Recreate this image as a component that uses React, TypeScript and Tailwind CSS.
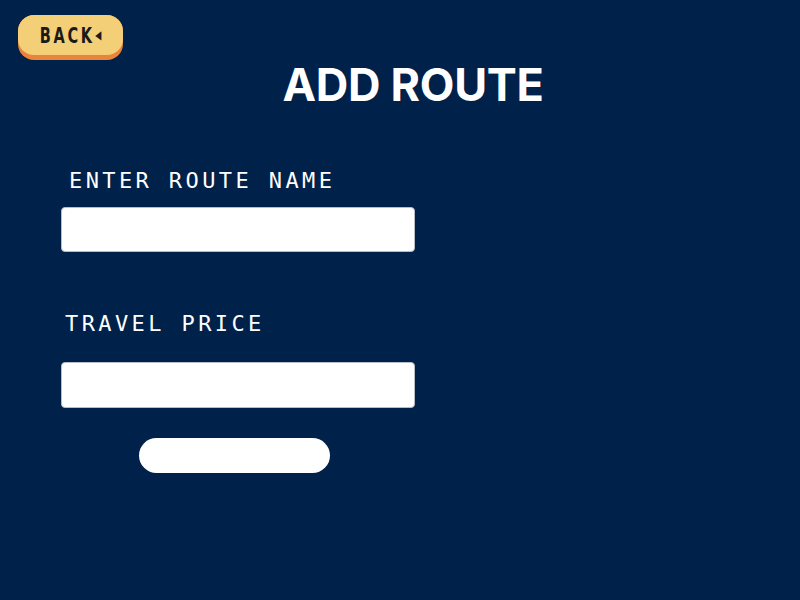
import React from 'react';

const App: React.FC = () => {
  return (
    <div className="w-[800px] h-[600px] bg-[#00214a] overflow-hidden relative">
      {/* Back */}
      <div className="pt-[15px] pl-[18px]">
        <button className="h-[45px] w-[105px] rounded-[16px] bg-[#ea843a] pb-[5px]">
          <span className="flex h-[40px] w-full items-center justify-center rounded-[16px] bg-[#f3cf78] text-[#1a1a1a]">
            <span className="inline-flex items-center gap-[1px] scale-x-[0.66] text-[22px] font-bold tracking-[4px] font-['DejaVu_Sans',sans-serif]">
              BACK<span className="text-[12px] tracking-normal">◀</span>
            </span>
          </span>
        </button>
      </div>

      {/* Title */}
      <h1 className="mt-[2px] text-center pl-[26px] text-white text-[45px] font-bold leading-none tracking-[-0.3px] font-['Inter',sans-serif]">
        ADD ROUTE
      </h1>

      {/* Form */}
      <div className="mt-[63px] pl-[61px] flex flex-col">
        <label className="pl-[8px] text-white text-[22px] leading-none tracking-[3.4px] font-['DejaVu_Sans_Mono',monospace]">
          ENTER ROUTE NAME
        </label>
        <input className="mt-[15px] h-[45px] w-[354px] rounded-[4px] border border-[#b8bcc4] bg-white" />

        <label className="mt-[61px] pl-[4px] text-white text-[22px] leading-none tracking-[3.4px] font-['DejaVu_Sans_Mono',monospace]">
          TRAVEL PRICE
        </label>
        <input className="mt-[27px] h-[46px] w-[354px] rounded-[4px] border border-[#b8bcc4] bg-white" />

        <button className="mt-[30px] ml-[78px] h-[35px] w-[191px] rounded-full bg-white" />
      </div>
    </div>
  );
};

export default App;
